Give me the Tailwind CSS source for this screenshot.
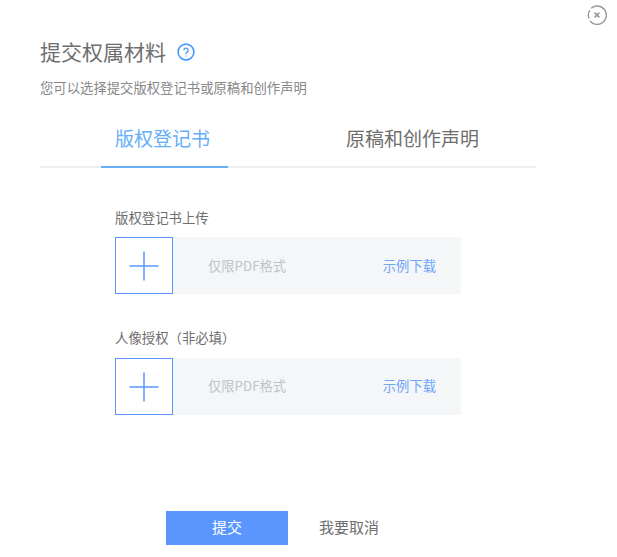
<!DOCTYPE html>
<html lang="zh-CN">
<head>
<meta charset="UTF-8">
<title>提交权属材料</title>
<script src="https://cdn.jsdelivr.net/npm/@tailwindcss/browser@4"></script>
</head>
<body class="bg-white font-['Noto_Sans_CJK_SC','Liberation_Sans',sans-serif] text-[#666]">
<div class="relative w-[617px] h-[557px] overflow-hidden pl-10 pt-10">
  <!-- close -->
  <button class="absolute left-[587px] top-[5px] w-5 h-5">
    <svg viewBox="0 0 20 20" class="w-5 h-5" fill="none" stroke="#999" stroke-width="1.4">
      <path d="M4.2 3.2A9.2 9.2 0 1 1 3 16"/>
      <path d="M2 13.6A9.2 9.2 0 0 1 2.9 5.2"/>
      <path d="M7.6 7.6l4.8 4.8M12.4 7.6l-4.8 4.8" stroke-width="1.6"/>
    </svg>
  </button>

  <div class="flex items-center h-6">
    <h1 class="text-[21px] leading-6 pb-[2px] font-normal text-[#6e6e6e]">提交权属材料</h1>
    <svg viewBox="0 0 18 18" class="w-[18px] h-[18px] ml-[11px]" fill="none" stroke="#4a9bf5">
      <circle cx="9" cy="9" r="7.9" stroke-width="1.6"/>
      <path d="M6.8 7.2a2.2 2.2 0 1 1 3.4 1.9c-.8.5-1.2.9-1.2 1.8" stroke-width="1.3"/>
      <path d="M9 12.4v1.2" stroke-width="1.3"/>
    </svg>
  </div>
  <p class="mt-[14px] text-[13.35px] leading-5 text-[#888]">您可以选择提交版权登记书或原稿和创作声明</p>

  <div class="mt-[9px] w-[496px] h-[61px] border-b-2 border-[#eeeeee] flex text-[19px] leading-[62px]">
    <div class="ml-[61px] w-[127px] h-[61px] pl-[14px] text-[#66aef8] border-b-2 border-[#66aef8]">版权登记书</div>
    <div class="ml-[118px] text-[#6e6e6e]">原稿和创作声明</div>
  </div>

  <div class="ml-[75px] mt-[40px] w-[346px]">
    <label class="block text-[13.4px] leading-[18px] text-[#6e6e6e]">版权登记书上传</label>
    <div class="mt-[11px] flex items-center h-[57px] bg-[#f5f6f8] text-[13.3px]">
      <div class="w-[58px] h-[57px] bg-white border border-[#5b96ff] flex items-center justify-center shrink-0">
        <svg viewBox="0 0 30 30" class="w-[30px] h-[30px]" stroke="#5b96ff" stroke-width="1.5"><path d="M0.5 15h29M15 0.5v29"/></svg>
      </div>
      <span class="ml-[35px] text-[#c0c4c9]">仅限PDF格式</span>
      <span class="ml-auto mr-[25px] text-[#6fa5fb]">示例下载</span>
    </div>
  </div>

  <div class="ml-[75px] mt-[34px] w-[346px]">
    <label class="block text-[13.4px] leading-[18px] text-[#6e6e6e]">人像授权（非必填）</label>
    <div class="mt-[12px] flex items-center h-[57px] bg-[#f5f6f8] text-[13.3px]">
      <div class="w-[58px] h-[57px] bg-white border border-[#5b96ff] flex items-center justify-center shrink-0">
        <svg viewBox="0 0 30 30" class="w-[30px] h-[30px]" stroke="#5b96ff" stroke-width="1.5"><path d="M0.5 15h29M15 0.5v29"/></svg>
      </div>
      <span class="ml-[35px] pb-[2px] text-[#c0c4c9]">仅限PDF格式</span>
      <span class="ml-auto mr-[25px] pb-[2px] text-[#6fa5fb]">示例下载</span>
    </div>
  </div>

  <div class="ml-[126px] mt-[96px] flex items-center text-[15px]">
    <button class="w-[122px] h-[34px] pb-[2px] bg-[#5b96ff] text-white">提交</button>
    <button class="ml-[31px] pb-[2px] text-[#6e6e6e]">我要取消</button>
  </div>
</div>
</body>
</html>
